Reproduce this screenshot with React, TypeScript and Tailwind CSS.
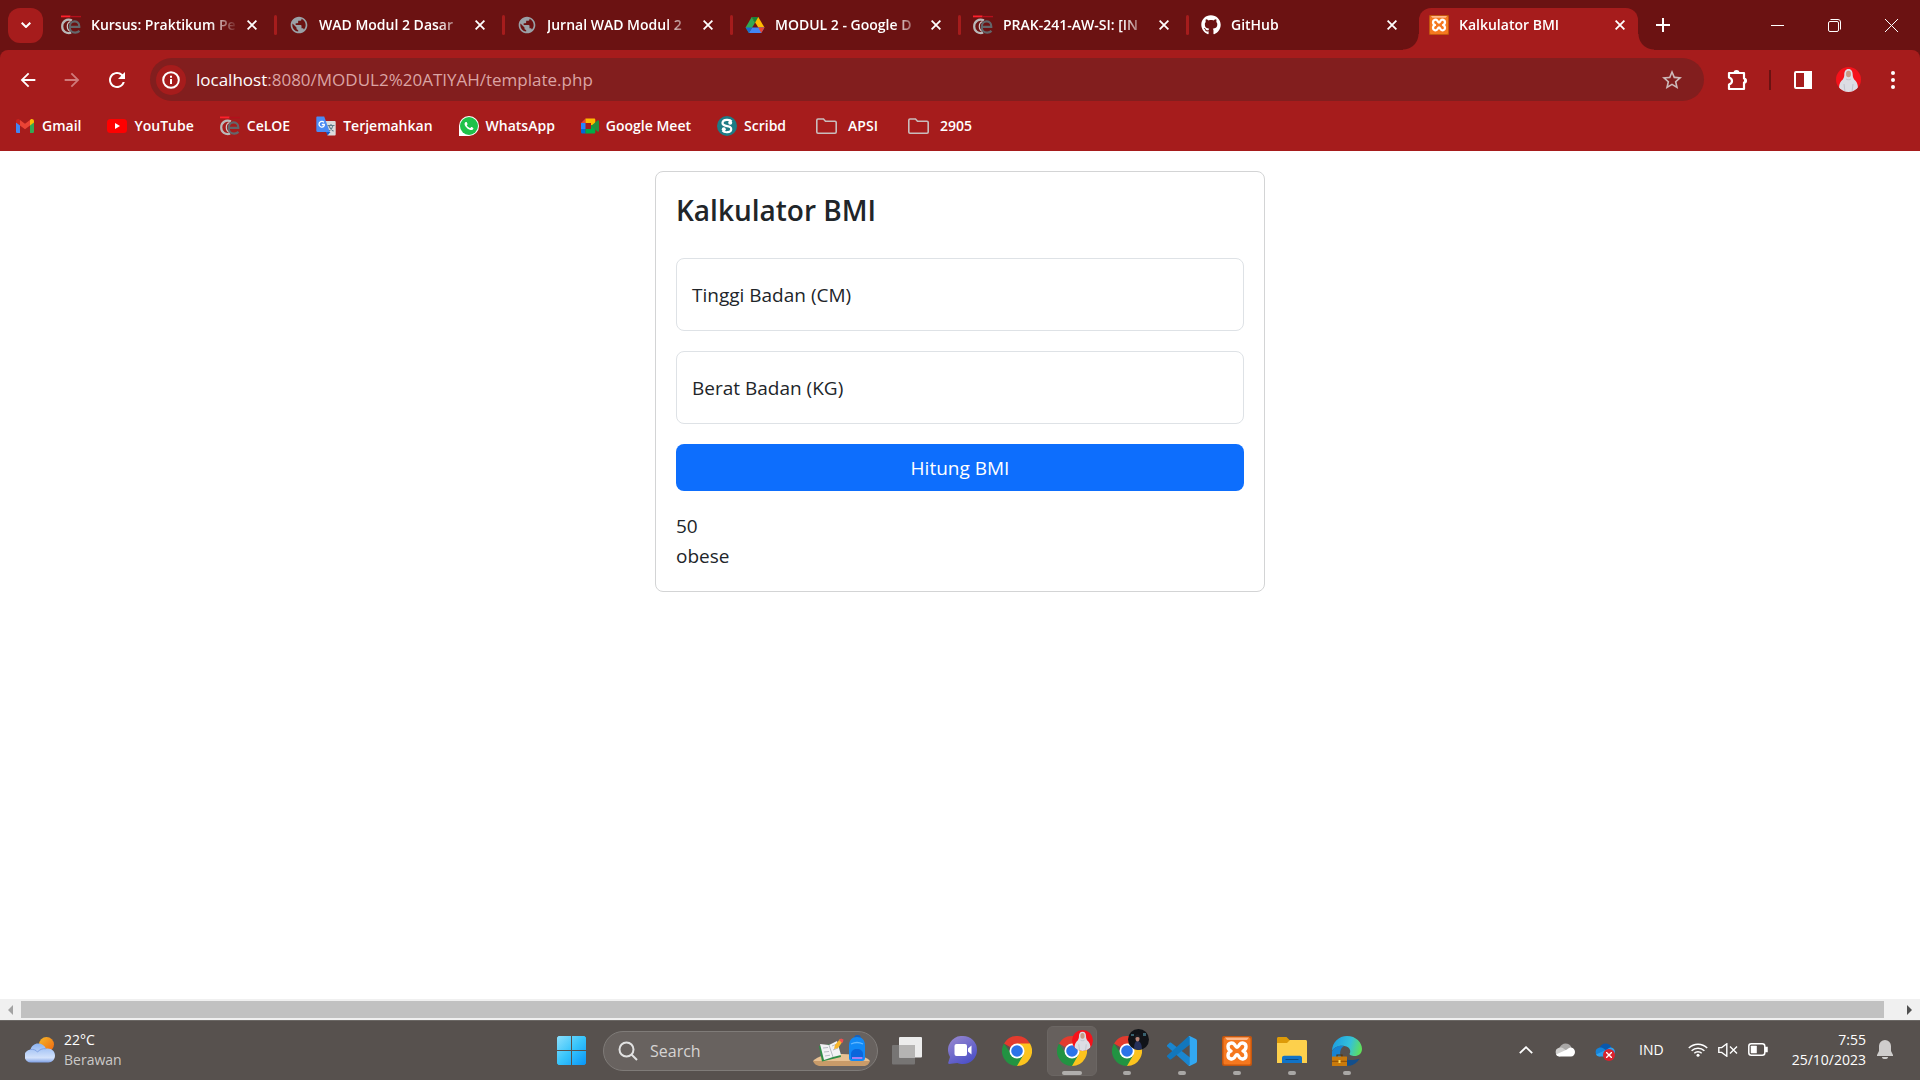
import { useState } from "react";
import type { ReactNode } from "react";
import { FaGithub } from "react-icons/fa";
import { MdOutlineExtension, MdPublic, MdRefresh, MdStarBorder, MdArrowBack, MdArrowForward } from "react-icons/md";

/* ---------- Site icons ---------- */

function CeloeIcon() {
  return (
    <svg viewBox="0 0 20 20" className="size-5" fill="none">
      <path d="M0 1.400h9.500" stroke="#ff1f2b" strokeWidth="1.800" />
      <path d="M9.500 1.600H20" stroke="#b3101c" strokeWidth="1.400" />
      <path d="M11 5.300C5.500 3.200 1.200 6.500 1.200 11.500c0 4.700 4 7.600 9 6.300" stroke="#b9b9b9" strokeWidth="2.200" />
      <path d="M9.500 6.500c-4.300 1.500-4.300 8.500.2 10" stroke="#cfcaca" strokeWidth="1.200" />
      <path d="M8.500 11.800h9.800c.2-3.200-1.800-5.400-4.600-5.400-3 0-5 2.400-5 5.500 0 3.400 2.300 5.700 5.500 5.700 1.800 0 3.200-.6 4.300-1.700" stroke="#63666a" strokeWidth="2.200" />
    </svg>
  );
}

function DriveIcon() {
  return (
    <svg viewBox="0 0 20 20" className="size-5">
      <path d="M6.700 2h6.600l6.200 10.600h-6.200z" fill="#ffba00" />
      <path d="M6.700 2 10 7.700 3.900 18 .6 12.600z" fill="#31a853" />
      <path d="M6.700 2h6.600L10 7.700z" fill="#188038" />
      <path d="M7.200 12.600h12.300L16.200 18H3.900z" fill="#4285f4" />
      <path d="m.6 12.600 3.300 5.400 3.200-5.400z" fill="#1967d2" />
      <path d="M13.300 12.600h6.200L16.200 18z" fill="#ea4335" />
    </svg>
  );
}

function XamppIcon({ className }: { className: string }) {
  return (
    <svg viewBox="0 0 30 30" className={className} fill="none">
      <rect width="30" height="30" rx="2" fill="#c4560f" />
      <rect x="1.500" y="1.500" width="27" height="27" rx="1.500" fill="#f5781f" />
      <path d="M3 1.500h24l-2 2.500H5z" fill="#ffb98a" />
      <path
        d="M15 11.300c-1.200 0-1.500-1.500-2.500-2.800C10.500 6 6 7 6 10.500c0 2.300 1.300 3.900 3 4.500-1.700.6-3 2.200-3 4.500 0 3.500 4.500 4.500 6.500 2 1-1.300 1.300-2.800 2.500-2.800s1.500 1.500 2.500 2.800c2 2.500 6.500 1.500 6.500-2 0-2.300-1.300-3.900-3-4.500 1.700-.6 3-2.200 3-4.500 0-3.500-4.500-4.500-6.500-2-1 1.300-1.300 2.800-2.500 2.800Z"
        stroke="#fff"
        strokeWidth="3.400"
        strokeLinejoin="round"
      />
    </svg>
  );
}

function GmailIcon() {
  return (
    <span className="flex w-5 justify-center">
      <svg viewBox="0 0 18 14" className="h-3.5 w-[18px]">
        <path d="M0 3v9.700c0 .7.600 1.300 1.300 1.300H4V6z" fill="#4285f4" />
        <path d="M18 3v9.700c0 .7-.6 1.300-1.300 1.300H14V6z" fill="#34a853" />
        <path d="M0 2.200C0 .5 2-.6 3.400.5L4 1v5.500L0 3.500z" fill="#c5221f" />
        <path d="M18 2.200C18 .5 16-.6 14.600.5L14 1v5.500l4-3z" fill="#fbbc04" />
        <path d="m4 1 5 3.800L14 1v5.500l-5 3.700-5-3.700z" fill="#ea4335" />
      </svg>
    </span>
  );
}

function YoutubeIcon() {
  return (
    <svg viewBox="0 0 20 14" className="h-3.5 w-5">
      <rect width="20" height="14" rx="3.500" fill="#f00" />
      <path d="m8 4 5 3-5 3z" fill="#fff" />
    </svg>
  );
}

function TranslateIcon() {
  return (
    <svg viewBox="0 0 20 20" className="size-5" fill="none">
      <path d="M8 5h10.500c.8 0 1.200.5 1.200 1.200v12c0 .8-.5 1.300-1.200 1.300h-7z" fill="#dcdcdc" />
      <path d="M11.500 9.500h7M15 8v1.500m2 0c-.5 2.500-2.300 4.500-4 5.500m0-5c.8 2 2.500 4 4.500 5.300" stroke="#607d8b" strokeWidth="1.100" />
      <path d="M11.500 19.500 10 16h4.500z" fill="#1a56c4" />
      <path d="M1.500.5h6.700l5.600 15.500H1.500C.8 16 .3 15.500.3 14.800V1.700C.3 1 .8.5 1.500.5Z" fill="#4a8af4" />
      <path d="M8 6.200c-2-1.800-5-.4-5 2.100 0 2.700 3.400 3.900 4.900 1.800.3-.5.500-1 .4-1.600H5.800" stroke="#fff" strokeWidth="1.300" />
    </svg>
  );
}

function WhatsappIcon() {
  return (
    <span className="flex size-5 items-center justify-center rounded-full rounded-bl-sm bg-white">
      <span className="flex size-[18px] items-center justify-center rounded-full bg-[#1fc24a]">
        <svg viewBox="0 0 448 512" className="size-5" fill="#fff">
          <path d="M325.100 300.500c-5.500-2.800-32.800-16.200-37.900-18-5.100-1.900-8.800-2.800-12.500 2.800-3.700 5.600-14.300 18-17.600 21.800-3.200 3.700-6.500 4.200-12 1.400-32.600-16.300-54-29.100-75.500-66-5.700-9.800 5.700-9.100 16.300-30.300 1.800-3.700.9-6.900-.5-9.700-1.400-2.800-12.500-30.100-17.100-41.200-4.500-10.800-9.100-9.300-12.500-9.500-3.200-.2-6.900-.2-10.600-.2-3.700 0-9.700 1.400-14.800 6.900-5.100 5.600-19.400 19-19.400 46.300 0 27.300 19.900 53.700 22.600 57.400 2.800 3.700 39.100 59.700 94.800 83.800 35.200 15.200 49 16.500 66.600 13.900 10.700-1.600 32.800-13.400 37.400-26.400 4.600-13 4.600-24.100 3.200-26.400-1.300-2.500-5-3.900-10.500-6.600z" />
        </svg>
      </span>
    </span>
  );
}

function MeetIcon() {
  return (
    <svg viewBox="0 0 18 16" className="h-4 w-[18px]">
      <path d="M0 5h4.500v6H0z" fill="#2684fc" />
      <path d="M0 11h4.500v4.500H1.300C.6 15.500 0 15 0 14.200z" fill="#0066da" />
      <path d="M0 5 4.500.5V5z" fill="#ea4335" />
      <path d="M4.500.5H13c.8 0 1.300.5 1.300 1.300V7L10 8.500V5H4.500z" fill="#ffba00" />
      <path d="M4.500 11H10V7l4.300 1.500v5.700c0 .8-.5 1.300-1.300 1.300H4.500z" fill="#00ac47" />
      <path d="M10 8 16.800 2.300c.5-.4 1.200 0 1.200.6v10.200c0 .6-.7 1-1.200.6z" fill="#23903c" />
    </svg>
  );
}

function ScribdIcon() {
  return (
    <svg viewBox="0 0 20 20" className="size-5" fill="none">
      <circle cx="10" cy="10" r="10" fill="#1e7b85" />
      <path d="M14.500 5.500c-1.600-2.300-8.500-2.200-9 1.200-.3 2.500 1.800 3 4.500 3.400 2.600.4 4.600 1.200 4.200 3.500-.5 3.300-6.900 3.300-8.600 1" stroke="#fff" strokeWidth="2.200" />
      <circle cx="13.200" cy="6.800" r="2" fill="#fff" />
      <circle cx="6.800" cy="13.300" r="2" fill="#fff" />
    </svg>
  );
}

function FolderIcon() {
  return (
    <svg viewBox="0 0 21 16" className="mx-1 h-4 w-[21px]" fill="none" stroke="#c9bcbc" strokeWidth="1.600">
      <path d="M2 1h5.500l2 2.300H19c.7 0 1.200.5 1.200 1.200V14c0 .7-.5 1.200-1.200 1.200H2c-.7 0-1.200-.5-1.200-1.200V2.200C.8 1.500 1.300 1 2 1Z" />
    </svg>
  );
}

function CloseGlyph() {
  return (
    <svg viewBox="0 0 10 10" className="size-2.5" stroke="#fff" strokeWidth="1.800">
      <path d="m.6.600 8.800 8.800M9.400.600.600 9.400" />
    </svg>
  );
}

/* ---------- Browser ---------- */

type Tab = { title: string; icon: ReactNode; active?: boolean; divider?: boolean };

const tabs: Tab[] = [
  { title: "Kursus: Praktikum Pe", icon: <CeloeIcon />, divider: true },
  { title: "WAD Modul 2 Dasar", icon: <MdPublic className="size-5 text-[#9aa0a6]" />, divider: true },
  { title: "Jurnal WAD Modul 2", icon: <MdPublic className="size-5 text-[#9aa0a6]" />, divider: true },
  { title: "MODUL 2 - Google D", icon: <DriveIcon />, divider: true },
  { title: "PRAK-241-AW-SI: [IN", icon: <CeloeIcon />, divider: true },
  { title: "GitHub", icon: <FaGithub className="size-5 text-white" /> },
  { title: "Kalkulator BMI", icon: <XamppIcon className="size-5" />, active: true },
];

function TabStrip() {
  return (
    <div className="flex h-[50px] items-center bg-[#6b1212] pl-2 text-white">
      <button aria-label="Search tabs" className="mr-1.5 flex size-[35px] shrink-0 items-center justify-center rounded-xl bg-[#a61c1c]">
        <svg viewBox="0 0 10 6" className="h-1.5 w-2.5" fill="none" stroke="#fff" strokeWidth="2">
          <path d="m.7.700 4.300 4.300L9.300.700" />
        </svg>
      </button>
      <div role="tablist" className="flex h-full min-w-0 flex-1">
        {tabs.map((tab) => (
          <div key={tab.title} className="relative flex h-full min-w-0 max-w-[228px] flex-1 items-center pl-3">
            {tab.active && (
              <span className="absolute inset-y-0 left-0.5 right-[7px] top-2 rounded-t-xl bg-[#a61c1c]">
                <span className="absolute bottom-0 -left-4 size-4 bg-[radial-gradient(circle_at_0_0,transparent_15px,#a61c1c_16px)]" />
                <span className="absolute bottom-0 -right-4 size-4 bg-[radial-gradient(circle_at_100%_0,transparent_15px,#a61c1c_16px)]" />
              </span>
            )}
            <button role="tab" aria-selected={!!tab.active} className="relative flex min-w-0 flex-1 items-center gap-2.5 text-left">
              <span className="shrink-0">{tab.icon}</span>
              <span className="min-w-0 flex-1 whitespace-nowrap text-sm font-semibold [mask-image:linear-gradient(to_right,#000_calc(100%-28px),transparent)]">
                {tab.title}
              </span>
            </button>
            <button aria-label={`Close ${tab.title}`} className="relative mr-[15px] ml-1 flex size-5 shrink-0 items-center justify-center">
              <CloseGlyph />
            </button>
            {tab.divider && <span className="absolute right-0 h-5 w-[3px] rounded-sm bg-[#a61c1c]" />}
          </div>
        ))}
        <button aria-label="New tab" className="flex w-9 items-center justify-center">
          <svg viewBox="0 0 14 14" className="size-3.5" stroke="#fff" strokeWidth="2">
            <path d="M7 0v14M0 7h14" />
          </svg>
        </button>
      </div>
      <button aria-label="Minimize" className="flex h-full w-[57px] shrink-0 items-center justify-center">
        <svg viewBox="0 0 13 13" className="size-[13px]" stroke="#fff">
          <path d="M0 6.500h13" />
        </svg>
      </button>
      <button aria-label="Restore" className="flex h-full w-[57px] shrink-0 items-center justify-center">
        <svg viewBox="0 0 13 13" className="size-[13px]" fill="none" stroke="#fff">
          <rect x=".5" y="2.500" width="10" height="10" rx="1.500" />
          <path d="M2.500.5H10A2.500 2.500 0 0 1 12.500 3v7.500" />
        </svg>
      </button>
      <button aria-label="Close window" className="flex h-full w-[57px] shrink-0 items-center justify-center">
        <svg viewBox="0 0 13 13" className="size-[13px]" stroke="#fff">
          <path d="m0 0 13 13M13 0 0 13" />
        </svg>
      </button>
    </div>
  );
}

/* Puzzle piece: tab on the top and right edges, notch on the left edge */
function ExtensionIcon() {
  return (
    <svg viewBox="0 0 24 24" className="size-6" fill="none">
      <path
        d="M4 5h15v5.500c2 .3 2 3.700 0 4V21H4v-4.500c4-1.500 4-5.500 0-7Z"
        stroke="#fff"
        strokeWidth="2.200"
        strokeLinejoin="round"
      />
      <path d="M8.500 5a3 3 0 0 1 6 0zM19 9.800a3 3 0 0 1 0 6z" fill="#fff" />
    </svg>
  );
}

function Toolbar() {
  return (
    <div className="flex items-center pt-2 pr-[19px] pl-[15px] text-white">
      <button aria-label="Back" className="flex size-[26px] items-center justify-center">
        <MdArrowBack className="size-[22px]" />
      </button>
      <button aria-label="Forward" className="ml-[18px] flex size-[26px] items-center justify-center text-[#d07a7a]">
        <MdArrowForward className="size-[22px]" />
      </button>
      <button aria-label="Reload" className="ml-[19px] flex size-[26px] items-center justify-center">
        <MdRefresh className="size-6" />
      </button>
      <div className="relative ml-5 flex h-[43px] min-w-0 flex-1 items-center rounded-full bg-[#821e1e] pr-5 pl-1.5">
        <button aria-label="Site information" className="flex size-[30px] shrink-0 items-center justify-center rounded-full bg-[#a61c1c]">
          <svg viewBox="0 0 18 18" className="size-[18px]" fill="none" stroke="#fff" strokeWidth="2">
            <circle cx="9" cy="9" r="7.800" />
            <path d="M9 8v5M9 4.800v2" />
          </svg>
        </button>
        <div className="ml-2.5 min-w-0 flex-1 truncate text-[17px] text-[#dba4a4]">
          <span className="text-white">localhost</span>:8080/MODUL2%20ATIYAH/template.php
        </div>
        <button aria-label="Bookmark this page">
          <MdStarBorder className="size-6 text-[#cdb9b9]" />
        </button>
      </div>
      <button aria-label="Extensions" className="ml-[21px]">
        <ExtensionIcon />
      </button>
      <span className="ml-5 h-5 w-0.5 bg-[#6b1212]" />
      <button aria-label="Side panel" className="ml-[23px]">
        <svg viewBox="0 0 18 18" className="size-[18px]" fill="none" stroke="#fff" strokeWidth="2">
          <rect x="1" y="1" width="16" height="16" rx="1" />
          <path d="M11 1h6v16h-6z" fill="#fff" />
        </svg>
      </button>
      <button aria-label="Profile" className="ml-6 size-[25px] overflow-hidden rounded-full">
        <ProfileArt />
      </button>
      <button aria-label="Menu" className="ml-6 flex w-4 justify-center">
        <svg viewBox="0 0 4 18" className="h-[18px] w-1" fill="#fff">
          <circle cx="2" cy="2" r="2" />
          <circle cx="2" cy="9" r="2" />
          <circle cx="2" cy="16" r="2" />
        </svg>
      </button>
    </div>
  );
}

function ProfileArt() {
  return (
    <svg viewBox="0 0 25 25" className="size-full">
      <rect width="25" height="25" fill="#f5121b" />
      <path d="M12.500 2C9.500 2 8.300 4.500 8.300 7.500c0 2-.5 3.500-1.500 5C4.500 14 3.200 17 3 20.500L5.500 25h14l2.500-4.500c-.2-3.500-1.500-6.500-3.800-8-1-1.500-1.500-3-1.500-5C16.700 4.500 15.500 2 12.500 2Z" fill="#dcdde4" />
      <ellipse cx="12.500" cy="7" rx="2.500" ry="3.300" fill="#c99a86" />
      <path d="M10 12c1.500 1 3.500 1 5 0M8 17l1 8M17 17l-1 8" stroke="#b4b8c4" strokeWidth=".7" fill="none" />
    </svg>
  );
}

const bookmarks: { label: string; icon: ReactNode }[] = [
  { label: "Gmail", icon: <GmailIcon /> },
  { label: "YouTube", icon: <YoutubeIcon /> },
  { label: "CeLOE", icon: <CeloeIcon /> },
  { label: "Terjemahkan", icon: <TranslateIcon /> },
  { label: "WhatsApp", icon: <WhatsappIcon /> },
  { label: "Google Meet", icon: <MeetIcon /> },
  { label: "Scribd", icon: <ScribdIcon /> },
  { label: "APSI", icon: <FolderIcon /> },
  { label: "2905", icon: <FolderIcon /> },
];

function BookmarkBar() {
  return (
    <nav aria-label="Bookmarks" className="flex h-[50px] items-center gap-[26px] pl-[15px] text-sm font-semibold text-white">
      {bookmarks.map((b) => (
        <a key={b.label} href="#" className="flex items-center gap-[7px]">
          {b.icon}
          {b.label}
        </a>
      ))}
    </nav>
  );
}

/* ---------- Page ---------- */

function Field({ id, label }: { id: string; label: string }) {
  const [value, setValue] = useState("");
  return (
    <div className="relative">
      <input
        id={id}
        value={value}
        onChange={(e) => setValue(e.target.value)}
        className="block h-[73px] w-full rounded-lg border border-[#dee2e6] bg-white px-4 outline-none"
      />
      {value === "" && (
        <label htmlFor={id} className="pointer-events-none absolute inset-0 flex items-center px-4">
          {label}
        </label>
      )}
    </div>
  );
}

function BmiPage() {
  return (
    <main className="flex-1 bg-white pt-5 text-[19px] leading-[30px] text-[#212529]">
      <section className="mx-auto max-w-[610px] rounded-lg border border-[#d3d4d5] p-5">
        <h1 className="text-[28px] leading-9 font-semibold">Kalkulator BMI</h1>
        <form className="mt-[30px] flex flex-col gap-5" onSubmit={(e) => e.preventDefault()}>
          <Field id="tinggi" label="Tinggi Badan (CM)" />
          <Field id="berat" label="Berat Badan (KG)" />
          <button className="h-[47px] rounded-lg bg-[#0d6efd] text-white">Hitung BMI</button>
        </form>
        <p className="mt-5">50</p>
        <p>obese</p>
      </section>
    </main>
  );
}

function ScrollBar() {
  return (
    <div className="flex h-[21px] items-center bg-[#f0f0f0]">
      <button aria-label="Scroll left" className="flex w-[21px] justify-center">
        <svg viewBox="0 0 5 10" className="h-2.5 w-[5px]" fill="#a3a3a3">
          <path d="M5 0v10L0 5z" />
        </svg>
      </button>
      <div className="h-[17px] flex-1 bg-[#c1c1c1]" />
      <button aria-label="Scroll right" className="flex w-9 justify-end pr-2">
        <svg viewBox="0 0 5 10" className="h-2.5 w-[5px]" fill="#505050">
          <path d="M0 0v10l5-5z" />
        </svg>
      </button>
    </div>
  );
}

/* ---------- Taskbar ---------- */

function ChromeLogo() {
  return (
    <svg viewBox="0 0 30 30" className="size-[30px]">
      <path d="M15 15 2 7.500A15 15 0 0 1 28 7.500L28 8z" fill="#e33b2e" />
      <path d="M15 7.500H28a15 15 0 0 1-13 22.500l-1-1 7.500-11z" fill="#fcc31e" />
      <path d="M2 7.500A15 15 0 0 0 15 30l6.300-11-6.300-1-6-.5z" fill="#229342" />
      <circle cx="15" cy="15" r="7.500" fill="#fff" />
      <circle cx="15" cy="15" r="5.800" fill="#2b73e8" />
    </svg>
  );
}

function StartLogo() {
  return (
    <svg viewBox="0 0 29 29" className="size-[29px]">
      <defs>
        <linearGradient id="start" x1="0" y1="0" x2="1" y2="1" gradientUnits="objectBoundingBox">
          <stop offset="0" stopColor="#8de0fc" />
          <stop offset=".5" stopColor="#37c4fb" />
          <stop offset="1" stopColor="#0895f7" />
        </linearGradient>
      </defs>
      <path d="M1.500 0H14v14H0V1.500zM15 0h12.500L29 1.500V14H15zM0 15h14v14H1.500L0 27.500zM15 15h14v12.500L27.500 29H15z" fill="url(#start)" />
    </svg>
  );
}

function TaskViewLogo() {
  return (
    <svg viewBox="0 0 30 28" className="h-7 w-[30px]">
      <rect y="8" width="23" height="19.500" rx="1" fill="#777574" />
      <rect x="7" width="23" height="20.500" rx="1" fill="#ececec" />
      <rect x="7" y="8" width="16" height="12.500" fill="#b5b4b3" />
    </svg>
  );
}

function ChatLogo() {
  return (
    <svg viewBox="0 0 29 29" className="size-[29px]">
      <defs>
        <linearGradient id="chat" x1="0" y1="0" x2=".6" y2="1">
          <stop offset="0" stopColor="#9a8ad0" />
          <stop offset="1" stopColor="#4f52c8" />
        </linearGradient>
      </defs>
      <path d="M15 0a14 14 0 0 1 0 28c-2 0-4-.3-5.500-1L1 28c-.6 0-1-.6-.8-1.200L2 21A14 14 0 0 1 15 0Z" fill="url(#chat)" />
      <rect x="6.500" y="8" width="12.500" height="12" rx="2" fill="#fff" />
      <path d="m20 12.500 3.500-3v9l-3.500-3z" fill="#fff" />
    </svg>
  );
}

function VsCodeLogo() {
  return (
    <svg viewBox="0 0 30 30" className="size-[30px]">
      <path d="M0 9.200 2.600 6.800c.5-.4 1.100-.4 1.600 0L23 21.500V30c-.8 0-1.500-.3-2-.8L.2 10.500c-.4-.4-.4-.9-.2-1.300Z" fill="#1a86d0" />
      <path d="M0 20.800l2.600 2.400c.5.400 1.100.4 1.600 0L23 8.500V0c-.8 0-1.500.3-2 .8L.2 19.500c-.4.400-.4.900-.2 1.300Z" fill="#1277bd" />
      <path d="M21 .8c.6-.7 1.400-.9 2.200-.6l5.700 2.700c.7.400 1.100 1 1.100 1.800v20.600c0 .8-.4 1.400-1.100 1.800l-5.700 2.700c-.8.300-1.600.1-2.200-.6.8.5 1.700 0 1.700-1V1.800c0-1-.9-1.500-1.700-1Z" fill="#32a8f2" />
    </svg>
  );
}

function ExplorerLogo() {
  return (
    <svg viewBox="0 0 30 27" className="h-[27px] w-[30px]">
      <path d="M0 1.500C0 .6.600 0 1.500 0h8l3 3H29v10H0z" fill="#dd9a08" />
      <path d="M0 6h10l3-3h15.500c.9 0 1.500.6 1.500 1.500V26H0z" fill="#fdd04c" />
      <path d="M5 26v-5c0-1.300.9-2.200 2.200-2.200h15.600c1.300 0 2.200.9 2.200 2.200v5z" fill="#1173c7" />
      <path d="M8.500 22.500h13" stroke="#0c4a80" strokeWidth="1" />
    </svg>
  );
}

function EdgeLogo() {
  return (
    <svg viewBox="0 0 30 30" className="size-[30px]">
      <defs>
        <linearGradient id="edgeTop" x1="0" y1=".3" x2="1" y2=".5">
          <stop offset="0" stopColor="#1b9de2" />
          <stop offset=".6" stopColor="#35c1d8" />
          <stop offset="1" stopColor="#5fe05a" />
        </linearGradient>
      </defs>
      <path d="M11 21c3 3.500 9 4 16.500 1.700-2 3.800-5.500 6-9.500 7-3 .3-5 .3-7-.700z" fill="#124f8c" />
      <path d="M15 0C24 0 30 6.500 30 13c0 4.500-3.500 7-7.300 7-3.200 0-5.700-1-5-2.500 1.300-2 .8-6.500-5.200-7.500C6.500 9 1 12 0 15.500 0 6 7 0 15 0Z" fill="url(#edgeTop)" />
      <path d="M0 15.500C2 11 7.500 9 12 10c-3 1.500-5 6-3 11H0z" fill="#1683d2" />
      <path d="M5 21v-2h5v2" fill="none" stroke="#5c3405" strokeWidth="1.200" />
      <rect y="20.500" width="15" height="9.500" rx=".5" fill="#c97a0c" />
      <path d="M0 25.300h15" stroke="#8b4e06" />
      <rect x="6.500" y="24" width="2" height="3" fill="#ffd957" />
    </svg>
  );
}

function SearchArt() {
  return (
    <svg viewBox="0 0 57 32" className="h-8 w-[57px]">
      <path d="M0 26c5-5 13-7 29-7s25 3 28 7l-6 3H6z" fill="#e8c193" />
      <path d="M0 26h57c-1 3-3 5-7 5H8c-4 0-7-2-8-5Z" fill="#c99b69" />
      <path d="m6 11 3 15.500L28 22l-3-14z" fill="#2f8d47" />
      <path d="m7 9 9 1 8-4 4 14-8 2-9 3z" fill="#f2f2f4" />
      <path d="m16 10 4 12M10 13l5-.5M11 17l5-.5M12 21l5-.8M19 11l5-2M20 15l5-2" stroke="#a7abb5" strokeWidth=".8" />
      <path d="m21 14 1-4 5-6 3 2-5 7z" fill="#f8b62c" />
      <path d="m26 5 2-1.500 2.500 1L30 7l-1 1z" fill="#f04f4f" />
      <path d="M42 3c0-3 5-3 5 0" fill="none" stroke="#0e62c8" strokeWidth="1.500" />
      <path d="M36 11c0-6 3-9 8-9s8 3 8 9v12c0 2-1 3-3 3H39c-2 0-3-1-3-3z" fill="#1189f6" />
      <path d="M38 19c0-3 2.500-5 6-5s6 2 6 5v5H38z" fill="#0b66dc" />
      <path d="M38 9c4-2 8-2 12 0" stroke="#62b8ff" strokeWidth="1.300" fill="none" />
      <path d="M39 23h10.500" stroke="#a67df0" strokeWidth="2" />
    </svg>
  );
}

function DarkAvatar() {
  return (
    <svg viewBox="0 0 21 21" className="size-full">
      <rect width="21" height="21" fill="#111318" />
      <path d="M3 5h3v2H3zM15 4h3v3h-3z" fill="#39616f" />
      <path d="M6 21c0-6 1-9 3.500-9S14 15 14 21z" fill="#25305a" />
      <ellipse cx="9.500" cy="9.500" rx="2" ry="3" fill="#b98577" />
      <path d="M7 9c0-5 5-5 5 0-1.500-1.500-3.500-1.500-5 0Z" fill="#1a1c22" />
    </svg>
  );
}

type TaskApp = { name: string; icon: ReactNode; state?: "open" | "active"; avatar?: ReactNode };

const apps: TaskApp[] = [
  { name: "Task view", icon: <TaskViewLogo /> },
  { name: "Chat", icon: <ChatLogo /> },
  { name: "Chrome", icon: <ChromeLogo /> },
  { name: "Chrome, profile 1", icon: <ChromeLogo />, state: "active", avatar: <ProfileArt /> },
  { name: "Chrome, profile 2", icon: <ChromeLogo />, state: "open", avatar: <DarkAvatar /> },
  { name: "Visual Studio Code", icon: <VsCodeLogo />, state: "open" },
  { name: "XAMPP", icon: <XamppIcon className="size-[30px]" />, state: "open" },
  { name: "File Explorer", icon: <ExplorerLogo />, state: "open" },
  { name: "Edge", icon: <EdgeLogo />, state: "open" },
];

function TaskButton({ app }: { app: TaskApp }) {
  return (
    <button
      aria-label={app.name}
      className={
        app.state === "active"
          ? "relative flex size-[50px] items-center justify-center rounded-md border border-[#6b6663] bg-[#66605d]"
          : "relative flex size-[50px] items-center justify-center"
      }
    >
      {app.icon}
      {app.avatar && <span className="absolute top-[3px] right-[3px] size-[21px] overflow-hidden rounded-full">{app.avatar}</span>}
      {app.state === "active" && <span className="absolute bottom-0 h-1 w-5 rounded-full bg-[#b0aeac]" />}
      {app.state === "open" && <span className="absolute bottom-px h-1 w-2 rounded-full bg-[#a9a7a5]" />}
    </button>
  );
}

function WeatherWidget() {
  return (
    <button className="flex items-center gap-[9px] justify-self-start pb-0.5 pl-[25px] text-left text-sm leading-5 text-white">
      <svg viewBox="0 0 30 26" className="h-[26px] w-[30px]">
        <defs>
          <linearGradient id="sun" x1="0" y1="0" x2="1" y2="1">
            <stop offset="0" stopColor="#f6b92a" />
            <stop offset="1" stopColor="#f0650f" />
          </linearGradient>
          <linearGradient id="cloud" x1="0" y1="0" x2="0" y2="1">
            <stop offset="0" stopColor="#8db4f2" />
            <stop offset=".75" stopColor="#d3e2fb" />
            <stop offset="1" stopColor="#7ea0e6" />
          </linearGradient>
        </defs>
        <circle cx="21.500" cy="7.500" r="7.500" fill="url(#sun)" />
        <path d="M6.500 25.500a6.500 6.500 0 0 1-1-13C6.500 9 9.500 6.500 13 6.500c3.800 0 6.700 2 8 5.200 5-1 9 2.300 9 6.800 0 4-3 7-6.500 7z" fill="url(#cloud)" />
        <path d="M5.500 12.500c3-.5 5.500.5 7 2.500 2-2.300 5-3.700 8.500-3.300" stroke="#7fa2e4" fill="none" />
      </svg>
      <span>
        <span className="block">22°C</span>
        <span className="block text-[#cbc9c8]">Berawan</span>
      </span>
    </button>
  );
}

function CloudGlyph({ back, mid, front }: { back: string; mid: string; front: string }) {
  return (
    <svg viewBox="0 0 20 14" className="h-3.5 w-5">
      <path d="M4.500 5C5.500 2 8 .5 10.500.5c2.700 0 5 1.500 6 4L11 9z" fill={back} />
      <path d="M4.500 13.500A4.500 4.500 0 0 1 4 4.700c1.500-.3 3.500 0 4.500.8l6 4z" fill={mid} />
      <path d="m1 11.500 11-5c1.500-1.500 3-2 4-2 2.500.2 4 2.300 4 4.500 0 2.500-1.800 4.500-4 4.500H4.500c-1.500 0-2.800-.8-3.500-2Z" fill={front} />
    </svg>
  );
}

function SystemTray() {
  return (
    <div className="flex items-center justify-self-end pr-[27px] pb-0.5 text-sm leading-5 text-white">
      <button aria-label="Show hidden icons">
        <svg viewBox="0 0 14 8" className="h-2 w-3.5" fill="none" stroke="#fff" strokeWidth="1.800">
          <path d="m.8 7.200 6.200-6 6.200 6" />
        </svg>
      </button>
      <button aria-label="OneDrive" className="ml-[22px]">
        <CloudGlyph back="#a9a7a6" mid="#d0cfce" front="#fff" />
      </button>
      <button aria-label="OneDrive, sync error" className="relative ml-5">
        <CloudGlyph back="#0a58ad" mid="#1683d8" front="#2fa2ee" />
        <span className="absolute top-1.5 left-2 flex size-3 items-center justify-center rounded-full bg-[#d9232e]">
          <svg viewBox="0 0 6 6" className="size-1.5" stroke="#fff" strokeWidth="1.400">
            <path d="m0 0 6 6M6 0 0 6" />
          </svg>
        </span>
      </button>
      <button className="ml-6">IND</button>
      <button aria-label="Network, volume and battery" className="ml-6 flex items-center gap-2.5">
        <svg viewBox="0 0 20 15" className="h-[15px] w-5" fill="none" stroke="#fff" strokeWidth="1.500">
          <path d="M.8 6a13 13 0 0 1 18.400 0M3.600 8.800a9 9 0 0 1 12.800 0M6.300 11.300a5.300 5.300 0 0 1 7.400 0" />
          <circle cx="10" cy="13.200" r="1.500" fill="#fff" stroke="none" />
        </svg>
        <svg viewBox="0 0 20 14" className="h-3.5 w-5" fill="none" stroke="#fff" strokeWidth="1.400">
          <path d="M.8 4.600h2.900L8.800.800v12.400L3.700 9.400H.8z" />
          <path d="m12 3.500 7 7M19 3.500l-7 7" />
        </svg>
        <svg viewBox="0 0 20 13" className="h-[13px] w-5" fill="none" stroke="#fff" strokeWidth="1.500">
          <rect x=".8" y=".8" width="16" height="11.400" rx="2.500" />
          <rect x="2.800" y="2.800" width="6" height="7.400" rx=".5" fill="#fff" stroke="none" />
          <path d="M17 4.500h2v4h-2" fill="#fff" />
        </svg>
      </button>
      <button className="ml-6 text-right">
        <span className="block">7:55</span>
        <span className="block">25/10/2023</span>
      </button>
      <button aria-label="Notifications" className="ml-[11px]">
        <svg viewBox="0 0 16 19" className="h-[19px] w-4" fill="#cfcdcc">
          <path d="M8 0a6 6 0 0 1 6 6v5l2 4v1H0v-1l2-4V6a6 6 0 0 1 6-6ZM5 17h6a3 2 0 0 1-6 0Z" />
        </svg>
      </button>
    </div>
  );
}

function Taskbar() {
  return (
    <footer className="grid h-[60px] grid-cols-[1fr_auto_1fr] items-center border-t border-[#6b6764] bg-[#57514e]">
      <WeatherWidget />
      <div className="flex items-center pr-1">
        <button aria-label="Start" className="flex h-[50px] w-[55px] items-center justify-center">
          <StartLogo />
        </button>
        <label className="mx-1 flex h-10 w-[275px] items-center rounded-full border border-[#7f7b78] bg-[#68625f] pr-[7px] pl-3.5">
          <svg viewBox="0 0 20 20" className="size-5 shrink-0" fill="none" stroke="#e2e2e2" strokeWidth="2">
            <circle cx="8.500" cy="8.500" r="7" />
            <path d="m13.500 13.500 5.500 5.500" />
          </svg>
          <input
            aria-label="Search"
            placeholder="Search"
            className="ml-3 min-w-0 flex-1 bg-transparent text-base text-white outline-none placeholder:text-[#d6d4d3]"
          />
          <SearchArt />
        </label>
        <div className="flex items-center gap-[5px]">
          {apps.map((app) => (
            <TaskButton key={app.name} app={app} />
          ))}
        </div>
      </div>
      <SystemTray />
    </footer>
  );
}

export default function App() {
  return (
    <div className="flex min-h-screen flex-col font-['Open_Sans','Noto_Sans',sans-serif]">
      <header className="bg-[#6b1212]">
        <TabStrip />
        <div className="rounded-t-lg bg-[#a61c1c]">
          <Toolbar />
          <BookmarkBar />
        </div>
      </header>
      <BmiPage />
      <ScrollBar />
      <Taskbar />
    </div>
  );
}
